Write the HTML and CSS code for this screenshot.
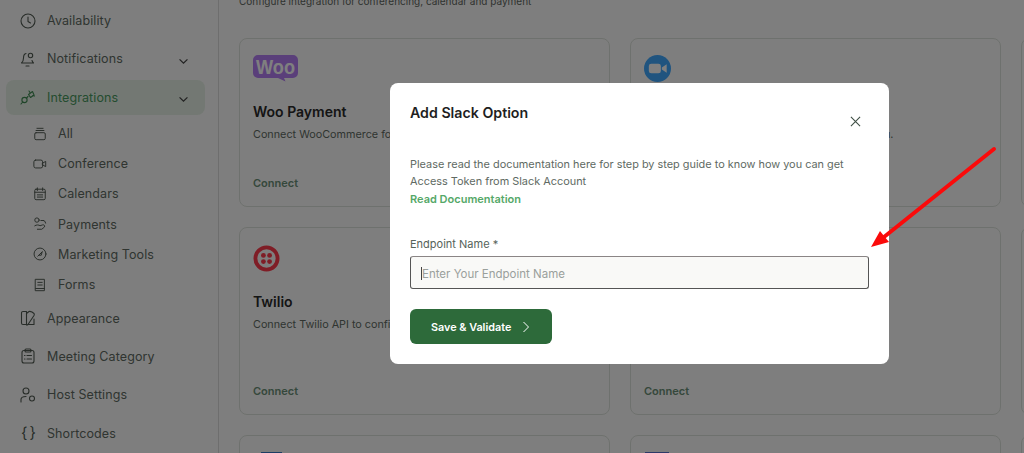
FILE: index.html
```html
<!DOCTYPE html>
<html lang="en">
<head>
<meta charset="utf-8">
<title>Integrations</title>
<link rel="stylesheet" href="styles.css">
</head>
<body>
<div class="app">
  <aside class="sidebar">
    <a class="nav"><svg class="ico" viewBox="0 0 16 16"><circle cx="8" cy="8" r="7"/><path d="M8 4v4.500l2.500 1.500"/></svg>Availability</a>
    <a class="nav has-sub"><svg class="ico" viewBox="0 0 16 16"><path d="M6 2.500C4 3 3.500 5 3.500 7c0 2.500-.8 4-2 5h12c-.8-.7-1.200-1.400-1.500-2.500M6 15h3"/><circle cx="10.500" cy="4.500" r="2.200"/></svg>Notifications<svg class="chev" viewBox="0 0 12 8"><path d="M1.500 1.500 6 6l4.500-4.500"/></svg></a>
    <a class="nav has-sub active"><svg class="ico" viewBox="0 0 16 16"><circle cx="4.500" cy="11" r="2.600"/><path d="M1 15l1.700-2M6.500 9l1.500-1.500"/><path d="M8.500 5.500 12.500 2.500l1.500 3.500-3.500 2.500z"/><path d="M10 3.500 9 2M13 6.500l1.500.5"/></svg>Integrations<svg class="chev" viewBox="0 0 12 8"><path d="M1.500 1.500 6 6l4.500-4.500"/></svg></a>
    <div class="subnav">
      <a class="sub"><svg class="ico" viewBox="0 0 16 16"><rect x="2" y="6.500" width="12" height="8" rx="1.500"/><path d="M3.500 4h9M4.500 1.500h7"/></svg>All</a>
      <a class="sub"><svg class="ico" viewBox="0 0 16 16"><rect x="1" y="3.500" width="10" height="9" rx="2"/><path d="M11 7l3.500-2v6L11 9z"/></svg>Conference</a>
      <a class="sub"><svg class="ico" viewBox="0 0 16 16"><rect x="2" y="2.500" width="12" height="12" rx="1.500"/><path d="M2 6h12M5 1v3M11 1v3M5 9h6M5 11.500h6"/></svg>Calendars</a>
      <a class="sub"><svg class="ico" viewBox="0 0 16 16"><circle cx="4.500" cy="3.500" r="2.500"/><path d="M9 4h3M12 4a3 3 0 0 1 2.500 3M2 10c2-1.500 5-1 6 0l3-1c1.500-.5 3 1 2 2.500l-3 2.500H5"/></svg>Payments</a>
      <a class="sub"><svg class="ico" viewBox="0 0 16 16"><circle cx="8" cy="8" r="6.800"/><path d="M5.500 10.500 10.500 5.500M7 9l3.500-3.500L9.500 9z"/></svg>Marketing Tools</a>
      <a class="sub"><svg class="ico" viewBox="0 0 16 16"><path d="M3 1.500h10v13H3zM3 12h10M5.500 5h5M5.500 8h5"/></svg>Forms</a>
    </div>
    <a class="nav"><svg class="ico" viewBox="0 0 16 16"><path d="M6.500 14.500H3a1.500 1.500 0 0 1-1.500-1.500V3A1.500 1.500 0 0 1 3 1.500h3.500zM6.500 3.500 9 1.500c1-.500 2 0 3 .500l2 1.500c.5.500.5 1 0 2l-6 9c-.5.500-1 .500-1.500.500M9 14.500h5V9"/></svg>Appearance</a>
    <a class="nav"><svg class="ico" viewBox="0 0 16 16"><rect x="2" y="2.500" width="12" height="12.500" rx="2"/><rect x="5" y="1" width="6" height="3" rx="1"/><path d="M4.500 7.500h.5M7 7.500h4.500M4.500 11h.5M7 11h4.500"/></svg>Meeting Category</a>
    <a class="nav"><svg class="ico" viewBox="0 0 16 16"><circle cx="6" cy="4" r="3"/><path d="M1 15v-2.500C1 10.500 3 9.500 6 9.500"/><circle cx="12" cy="11.500" r="2.500"/></svg>Host Settings</a>
    <a class="nav"><span class="ico braces">{ }</span>Shortcodes</a>
  </aside>
  <main class="main">
    <p class="subtitle">Configure integration for conferencing, calendar and payment</p>
    <div class="grid">
      <section class="card">
        <svg class="logo woo" viewBox="0 0 45 27"><path class="woo-bg" d="M5 0h35a5 5 0 0 1 5 5v13a5 5 0 0 1-5 5H31l1.500 3.500L25 23H5a5 5 0 0 1-5-5V5a5 5 0 0 1 5-5z"/><text x="22.500" y="18.500" textLength="39" lengthAdjust="spacingAndGlyphs" class="woo-text">Woo</text></svg>
        <h3>Woo Payment</h3>
        <p>Connect WooCommerce for payment</p>
        <a class="connect">Connect</a>
      </section>
      <section class="card">
        <svg class="logo" viewBox="0 0 28 28"><circle cx="14" cy="14" r="14" fill="#40a8ff"/><rect x="5" y="9" width="12.500" height="10" rx="2.500" fill="#fff"/><path d="M18.500 13l5-3.500v9l-5-3.500z" fill="#fff"/></svg>
        <h3>Zoom</h3>
        <p>Connect Zoom to create online meetings for you.</p>
        <a class="connect">Connect</a>
      </section>
      <section class="card"></section>
      <section class="card">
        <svg class="logo twilio" viewBox="0 0 28 28"><circle cx="14" cy="14" r="11.500" fill="none" stroke="#ff3a4c" stroke-width="4"/><circle cx="10.800" cy="10.800" r="2.500" fill="#ff3a4c"/><circle cx="17.200" cy="10.800" r="2.500" fill="#ff3a4c"/><circle cx="10.800" cy="17.200" r="2.500" fill="#ff3a4c"/><circle cx="17.200" cy="17.200" r="2.500" fill="#ff3a4c"/></svg>
        <h3>Twilio</h3>
        <p>Connect Twilio API to configure SMS</p>
        <a class="connect">Connect</a>
      </section>
      <section class="card">
        <div class="logo"></div>
        <h3>Slack</h3>
        <p>Connect Slack to get notifications of meetings.</p>
        <a class="connect">Connect</a>
      </section>
      <section class="card"></section>
      <section class="card peek"><span class="peek-logo"></span></section>
      <section class="card peek"><span class="peek-logo alt"></span></section>
      <section class="card peek"></section>
    </div>
  </main>
</div>
<div class="overlay">
  <div class="modal">
    <header class="modal-head">
      <h2>Add Slack Option</h2>
      <svg class="close" viewBox="0 0 12 12"><path d="M1 1l10 10M11 1 1 11"/></svg>
    </header>
    <p class="doc">Please read the documentation here for step by step guide to know how you can get Access Token from Slack Account</p>
    <a class="doc-link">Read Documentation</a>
    <label class="label">Endpoint Name *</label>
    <div class="input"><span class="caret"></span><span class="placeholder">Enter Your Endpoint Name</span></div>
    <button class="btn">Save &amp; Validate<svg viewBox="0 0 8 12"><path d="M1.500 1 6.500 6l-5 5"/></svg></button>
  </div>
</div>
<svg class="arrow" viewBox="0 0 1024 453"><path d="M994 149 884 237" stroke="#fb0a0a" stroke-width="4" stroke-linecap="round" fill="none"/><path d="M871 247 880 231 884 236 889 242z" fill="#fb0a0a"/></svg>
</body>
</html>
```

FILE: styles.css
```css
* { box-sizing: border-box; }
html, body { margin: 0; height: 100%; overflow: hidden; }
body { font-family: Inter, "Noto Sans", sans-serif; color: #1b1b1b; background: #fff; }
.app { display: flex; height: 453px; overflow: hidden; background: #fdfdfc; }
.sidebar { width: 219px; flex: none; border-right: 1px solid #ddd; padding: 3px 13px 0 6px; display: flex; flex-direction: column; }
.nav { display: flex; align-items: center; gap: 11px; height: 35px; padding-left: 14px; margin-bottom: 3.300px; font-size: 12.500px; color: #606a63; border-radius: 8px; letter-spacing: .1px; flex: none; }
.ico { width: 16px; height: 16px; flex: none; fill: none; stroke: #505a52; stroke-width: 1.100; stroke-linecap: round; stroke-linejoin: round; }
.chev { width: 11px; height: 7px; margin-left: auto; margin-right: 16px; margin-top: 5px; fill: none; stroke: #444; stroke-width: 1.400; }
.active { background: #e6f1e6; color: #4a9a60; }
.active .ico { stroke: #3f8a52; }
.subnav { display: flex; flex-direction: column; margin-top: .6px; margin-bottom: 1px; }
.sub { display: flex; align-items: center; gap: 11px; height: 30.200px; padding-left: 27px; font-size: 12.500px; color: #606a63; letter-spacing: .1px; }
.sub .ico { width: 14px; height: 14px; }
.braces { stroke: none; color: #505a52; font-size: 15px; line-height: 16px; white-space: nowrap; text-align: center; letter-spacing: -1px; }
.main { flex: 1; min-width: 0; padding-left: 20px; }
.subtitle { margin: -7px 0 0; height: 17px; line-height: 17px; font-size: 10px; color: #5f6761; }
.grid { display: grid; grid-template-columns: repeat(3, 371px); grid-template-rows: 169px 188px 60px; gap: 20px; margin-top: 28px; }
.card { border: 1px solid #dde3dd; border-radius: 8px; padding: 16px 13px 0; position: relative; overflow: hidden; display: flex; flex-direction: column; }
.logo { display: block; flex: none; height: 27px; width: 27px; margin-bottom: 20px; }
.woo { width: 45px; }
.twilio { margin-top: 1px; }
.woo-bg { fill: #b57ef5; }
.woo-text { fill: #fff; font-size: 21px; font-weight: 700; text-anchor: middle; font-family: "Liberation Sans", sans-serif; }
.card h3 { margin: 0; font-size: 14px; line-height: 20px; font-weight: 600; color: #2a2a2a; }
.card p { margin: 5px 0 0; font-size: 10.800px; line-height: 16px; color: #606a63; white-space: nowrap; }
.connect { margin-top: auto; margin-bottom: 16px; font-size: 11px; font-weight: 600; line-height: 14px; color: #6b9078; }
.peek { padding: 0; }
.peek-logo { display: block; width: 21px; height: 10px; margin: 16px 0 0 21px; background: #3a7bc8; }
.peek-logo.alt { width: 24px; margin-left: 14px; background: #5a72d0; }
.overlay { position: fixed; inset: 0; background: rgba(0, 0, 0, .5); padding: 83px 0 0 390px; }
.modal { width: 499px; height: 281px; background: #fff; border-radius: 8px; padding: 20px; display: flex; flex-direction: column; }
.modal-head { display: flex; justify-content: space-between; align-items: flex-start; height: 53px; flex: none; }
.modal-head h2 { margin: 0; font-size: 14.200px; line-height: 20px; font-weight: 600; color: #1f1f1f; }
.close { width: 11px; height: 11px; margin: 13px 8px 0 0; fill: none; stroke: #3f4f45; stroke-width: 1.200; }
.doc { margin: 0; font-size: 10.900px; line-height: 17px; color: #606a63; }
.doc-link { font-size: 11px; line-height: 18px; font-weight: 600; color: #55a868; }
.label { margin-top: 27px; font-size: 11px; line-height: 18px; color: #56635a; }
.input { margin-top: 3px; height: 33px; display: flex; align-items: center; padding: 2px 0 0 10px; background: #f9f9f7; border: 1px solid #555; border-top-color: #8a8585; border-radius: 3px; flex: none; }
.caret { width: 1px; height: 13px; background: #444; }
.placeholder { font-size: 11.500px; color: #9aa09c; }
.btn { margin-top: 20px; width: 142px; height: 35px; border: 0; border-radius: 6px; background: #2d6a3a; color: #fff; font: 600 10.800px Inter, sans-serif; display: flex; align-items: center; gap: 11px; padding: 2px 0 0 21px; flex: none; }
.btn svg { width: 8px; height: 12px; margin-top: -2px; fill: none; stroke: #fff; stroke-width: 1; }
.arrow { position: fixed; inset: 0; width: 1024px; height: 453px; pointer-events: none; }
```
